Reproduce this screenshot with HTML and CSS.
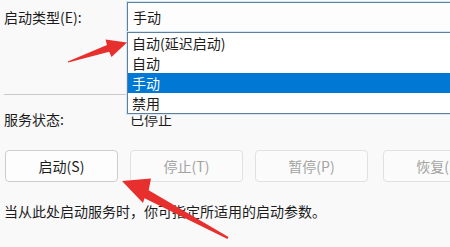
FILE: index.html
```html
<!DOCTYPE html>
<html lang="zh">
<head>
<meta charset="utf-8">
<link rel="stylesheet" href="styles.css">
</head>
<body>
<div class="page">
  <div class="row-type">
    <div class="label">启动类型(E):</div>
    <div class="combo">手动</div>
  </div>
  <div class="sep"></div>
  <div class="row-status">
    <div class="label">服务状态:</div>
    <div class="value">已停止</div>
  </div>
  <div class="buttons">
    <div class="btn enabled">启动(S)</div>
    <div class="btn">停止(T)</div>
    <div class="btn">暂停(P)</div>
    <div class="btn last">恢复(R)</div>
  </div>
  <div class="hint">当从此处启动服务时，你可指定所适用的启动参数。</div>

  <ul class="dropdown">
    <li>自动(延迟启动)</li>
    <li>自动</li>
    <li class="selected">手动</li>
    <li>禁用</li>
  </ul>

  <svg class="arrows" width="450" height="247" viewBox="0 0 450 247">
    <polygon fill="#e7302d" points="67.8,61.5 107,45.1 105.5,39.5 127,42.5 111.5,57 109.2,51.7 68.2,62.5"/>
    <polygon fill="#e7302d" points="122,181 151,178.5 148.7,190.2 228.5,237.1 227.5,238.9 144.5,198.2 143,203"/>
  </svg>
</div>
</body>
</html>
```

FILE: styles.css
```css
html, body {
  margin: 0;
  padding: 0;
  background: #f9f9f9;
  overflow: hidden;
}
.page {
  position: relative;
  width: 450px;
  height: 247px;
  overflow: hidden;
  padding: 2px 0 0 4px;
  box-sizing: border-box;
  font-family: "Noto Sans CJK SC", "Noto Sans", sans-serif;
  font-size: 14px;
  color: #1b1b1b;
}
.row-type {
  display: flex;
  align-items: center;
  height: 30px;
}
.label {
  width: 123px;
  flex: none;
  line-height: 20px;
}
.combo {
  flex: none;
  width: 340px;
  height: 28px;
  line-height: 28px;
  box-sizing: content-box;
  border: 1px solid #5f7f9f;
  box-shadow: 0 0 0 1px #d6e6f2;
  background: #fdfdfd;
  padding-left: 5px;
}
.sep {
  margin-top: 62px;
  width: 123px;
  height: 1px;
  background: #c9c9c9;
}
.row-status {
  display: flex;
  align-items: center;
  margin-top: 14px;
  height: 20px;
}
.value {
  margin-left: 3px;
  line-height: 20px;
}
.buttons {
  display: flex;
  gap: 12px;
  margin-top: 21px;
  margin-left: 1px;
}
.btn {
  flex: none;
  width: 113px;
  height: 32px;
  box-sizing: border-box;
  border: 1px solid #e1e1e1;
  border-radius: 4px;
  background: #fbfbfb;
  color: #a3a3a3;
  text-align: center;
  line-height: 30px;
}
.btn.enabled {
  border-color: #cdcdcd;
  background: #fdfdfd;
  color: #1b1b1b;
}
.btn.last {
  margin-left: 3px;
}
.hint {
  margin-top: 19px;
  line-height: 20px;
}
.dropdown {
  position: absolute;
  left: 127px;
  top: 32px;
  width: 340px;
  margin: 0;
  padding: 0;
  list-style: none;
  background: #ffffff;
  border: 1px solid #5f7f9f;
  box-shadow: 0 0 0 1px #d6e6f2;
}
.dropdown li {
  height: 20px;
  line-height: 20px;
  padding-left: 4px;
  font-size: 14px;
  color: #1b1b1b;
}
.dropdown li.selected {
  background: #0078d4;
  color: #ffffff;
}
.arrows {
  position: absolute;
  left: 0;
  top: 0;
  pointer-events: none;
}
```
